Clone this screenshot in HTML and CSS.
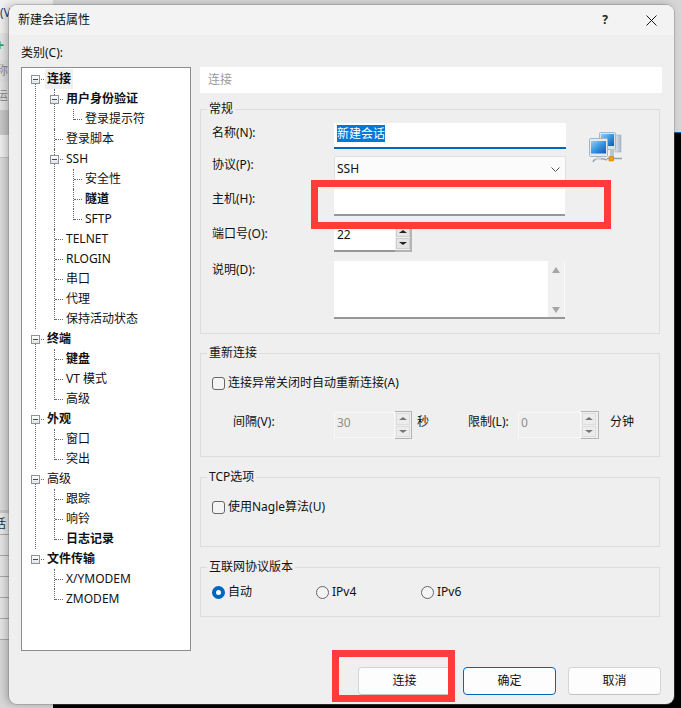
FILE: index.html
```html
<!DOCTYPE html>
<html lang="zh-CN">
<head>
<meta charset="utf-8">
<title>新建会话属性</title>
<link rel="stylesheet" href="styles.css">
</head>
<body>
<div class="desktop">
  <div class="app-side">
    <div class="band band-a"><span class="frag frag-menu">(V</span></div>
    <div class="band band-b"><span class="plus">+</span></div>
    <div class="band band-c"><span class="frag">称</span></div>
    <div class="band band-d"><span class="frag frag-d">运</span></div>
    <div class="band band-e"></div>
    <div class="band band-f"></div>
    <div class="band band-g"></div>
    <div class="band band-h"><span class="frag frag-blue">话</span></div>
    <div class="band band-row"></div>
    <div class="band band-row"></div>
    <div class="band band-row"></div>
    <div class="band band-row"></div>
    <div class="band band-row"></div>
    <div class="band band-rest"></div>
  </div>
  <div class="app-main"><div class="app-top"></div></div>

  <div class="dialog">
    <div class="titlebar">
      <span class="title">新建会话属性</span>
      <span class="help">?</span>
      <svg class="close" width="11" height="11" viewBox="0 0 11 11"><path d="M.5.5l10 10M10.5.5l-10 10" stroke="#1a1a1a" stroke-width="1" fill="none"/></svg>
    </div>
    <div class="body">
      <div class="cat-label">类别(C):</div>
      <div class="main">
        <div class="tree">
          <ul class="lvl0">
            <li><div class="row"><i class="box"></i><span class="txt b sel">连接</span></div>
              <ul class="lvl1">
                <li><div class="row"><i class="box"></i><span class="txt b">用户身份验证</span></div>
                  <ul class="lvl2"><li><div class="row"><span class="txt">登录提示符</span></div></li></ul>
                </li>
                <li><div class="row"><span class="txt">登录脚本</span></div></li>
                <li><div class="row"><i class="box"></i><span class="txt">SSH</span></div>
                  <ul class="lvl2">
                    <li><div class="row"><span class="txt">安全性</span></div></li>
                    <li><div class="row"><span class="txt b">隧道</span></div></li>
                    <li><div class="row"><span class="txt">SFTP</span></div></li>
                  </ul>
                </li>
                <li><div class="row"><span class="txt">TELNET</span></div></li>
                <li><div class="row"><span class="txt">RLOGIN</span></div></li>
                <li><div class="row"><span class="txt">串口</span></div></li>
                <li><div class="row"><span class="txt">代理</span></div></li>
                <li><div class="row"><span class="txt">保持活动状态</span></div></li>
              </ul>
            </li>
            <li><div class="row"><i class="box"></i><span class="txt b">终端</span></div>
              <ul class="lvl1">
                <li><div class="row"><span class="txt b">键盘</span></div></li>
                <li><div class="row"><span class="txt">VT 模式</span></div></li>
                <li><div class="row"><span class="txt">高级</span></div></li>
              </ul>
            </li>
            <li><div class="row"><i class="box"></i><span class="txt b">外观</span></div>
              <ul class="lvl1">
                <li><div class="row"><span class="txt">窗口</span></div></li>
                <li><div class="row"><span class="txt">突出</span></div></li>
              </ul>
            </li>
            <li><div class="row"><i class="box"></i><span class="txt">高级</span></div>
              <ul class="lvl1">
                <li><div class="row"><span class="txt">跟踪</span></div></li>
                <li><div class="row"><span class="txt">响铃</span></div></li>
                <li><div class="row"><span class="txt b">日志记录</span></div></li>
              </ul>
            </li>
            <li><div class="row"><i class="box"></i><span class="txt b">文件传输</span></div>
              <ul class="lvl1">
                <li><div class="row"><span class="txt">X/YMODEM</span></div></li>
                <li><div class="row"><span class="txt">ZMODEM</span></div></li>
              </ul>
            </li>
          </ul>
        </div>

        <div class="pane">
          <div class="pane-head">连接</div>

          <section class="group group-general">
            <span class="legend">常规</span>
            <div class="general-layout">
              <div class="form">
                <div class="field f-name"><label class="lbl">名称(N):</label><div class="input input-focus"><span class="selected">新建会话</span></div></div>
                <div class="field f-proto"><label class="lbl lbl-up">协议(P):</label><div class="combo"><span>SSH</span><svg width="9" height="5" viewBox="0 0 9 5"><path d="M.5.500l4 4 4-4" fill="none" stroke="#555" stroke-width="1"/></svg></div></div>
                <div class="field f-host"><label class="lbl">主机(H):</label><div class="input input-plain"></div></div>
                <div class="field f-port"><label class="lbl lbl-port">端口号(O):</label>
                  <div class="spin">
                    <div class="input input-plain spin-input">22</div>
                    <div class="spin-btns"><b class="sbtn"><i class="up"></i></b><b class="sbtn"><i class="down"></i></b></div>
                  </div>
                </div>
                <div class="field f-desc"><label class="lbl lbl-up">说明(D):</label>
                  <div class="memo"><div class="scroll"><i class="sup"></i><i class="sdown"></i></div></div>
                </div>
              </div>
              <svg class="net-icon" width="34" height="33" viewBox="0 0 34 33">
                <defs>
                  <linearGradient id="scr" x1="0" y1="0" x2="1" y2="1"><stop offset="0" stop-color="#8fd0f5"/><stop offset=".55" stop-color="#2f8fdc"/><stop offset="1" stop-color="#1a55b8"/></linearGradient>
                  <linearGradient id="twr" x1="0" y1="0" x2="1" y2="0"><stop offset="0" stop-color="#dfe6ee"/><stop offset="1" stop-color="#a9b6c4"/></linearGradient>
                </defs>
                <rect x="26" y="4" width="6" height="17" fill="url(#twr)" stroke="#a7b3c0" stroke-width=".6"/>
                <rect x="10.5" y="1.5" width="16" height="17" rx="1" fill="#dbe3ec" stroke="#a9b7c6"/>
                <rect x="12" y="3" width="13" height="12" fill="url(#scr)"/>
                <path d="M21 18h4v9h-4z" fill="#b9c4cf"/>
                <path d="M18 27.5h15" stroke="#93a2b0" stroke-width="1.6"/>
                <rect x="20" y="25.500" width="4.500" height="4.500" fill="#f59a12" stroke="#d07a08" stroke-width=".5"/>
                <rect x=".5" y="7.500" width="18" height="18" rx="1" fill="#e4eaf0" stroke="#a6b4c2"/>
                <rect x="2" y="10" width="15" height="12.500" fill="url(#scr)"/>
                <path d="M4 31c1-4 10-4 14-2" fill="none" stroke="#98a6b4" stroke-width="1.500"/>
                <path d="M7 26h5v3H7z" fill="#cfd8e1"/>
              </svg>
            </div>
          </section>

          <section class="group group-reconnect">
            <span class="legend">重新连接</span>
            <div class="check-row"><i class="check"></i><span>连接异常关闭时自动重新连接(A)</span></div>
            <div class="interval-row">
              <span class="lbl-interval">间隔(V):</span>
              <div class="spin spin-off">
                <div class="spin-input off-input">30</div>
                <div class="spin-btns"><b class="sbtn"><i class="up"></i></b><b class="sbtn"><i class="down"></i></b></div>
              </div>
              <span class="unit-sec">秒</span>
              <span class="lbl-limit">限制(L):</span>
              <div class="spin spin-off spin-wide">
                <div class="spin-input off-input">0</div>
                <div class="spin-btns"><b class="sbtn"><i class="up"></i></b><b class="sbtn"><i class="down"></i></b></div>
              </div>
              <span class="unit-min">分钟</span>
            </div>
          </section>

          <section class="group group-tcp">
            <span class="legend">TCP选项</span>
            <div class="check-row"><i class="check"></i><span>使用Nagle算法(U)</span></div>
          </section>

          <section class="group group-ip">
            <span class="legend">互联网协议版本</span>
            <div class="radio-row">
              <div class="radio-item ri-auto"><i class="radio on"></i><span>自动</span></div>
              <div class="radio-item ri-v4"><i class="radio"></i><span>IPv4</span></div>
              <div class="radio-item"><i class="radio"></i><span>IPv6</span></div>
            </div>
          </section>
        </div>
      </div>
      <div class="footer">
        <button class="btn">连接</button>
        <button class="btn btn-default">确定</button>
        <button class="btn">取消</button>
      </div>
    </div>
  </div>

  <div class="mark mark-host"></div>
  <div class="mark mark-connect"></div>
</div>
</body>
</html>
```
FILE: styles.css
```css
* { box-sizing: border-box; }
html, body { margin: 0; padding: 0; background: #000; }
body {
  font-family: "Noto Sans", "Noto Sans CJK SC", sans-serif;
  font-size: 12px;
  line-height: 20px;
  color: #111;
}
ul { list-style: none; margin: 0; padding: 0; }
i, b { display: block; font-style: normal; font-weight: normal; }

.desktop { position: relative; width: 681px; height: 708px; overflow: hidden; display: flex; background: #000; }

/* application visible behind the dialog */
.app-side { width: 53px; height: 708px; background: #e2e2e2; display: flex; flex-direction: column; }
.band { position: relative; overflow: hidden; padding-left: 0; }
.band-a { height: 33px; background: #f1f1f1; }
.band-b { height: 27px; background: #e6e6e6; }
.band-c { height: 22px; background: #e0e0e0; }
.band-d { height: 28px; background: #e4e4e4; }
.band-e { height: 25px; background: #c9c9c9; }
.band-f { height: 23px; background: #efefef; border-bottom: 1px solid #c4c4c4; }
.band-g { height: 352px; background: #dcdcdc; }
.band-h { height: 25px; background: #e8e8e8; border-top: 3px solid #c8c8c8; border-bottom: 1px solid #aaa; }
.band-row { height: 21px; background: #e6e6e6; border-bottom: 1px solid #aaa; }
.band-rest { flex: 1; background: #d8d8d8; }
.frag { display: block; color: #8a8a8a; line-height: 22px; margin-left: -4px; }
.frag-d { line-height: 28px; }
.frag-menu { color: #1b3a70; margin-left: 0; line-height: 26px; }
.frag-blue { color: #234; margin-left: -6px; line-height: 21px; }
.plus { display: block; color: #3fa34d; font-weight: 700; font-size: 16px; margin-left: -5px; line-height: 24px; }
.app-main { flex: 1; }
.app-top { height: 133px; background: #d6d6d6; border-bottom: 1px solid #0a64b4; }

/* dialog window */
.dialog {
  position: absolute; left: 9px; top: 5px; width: 665px; height: 699px;
  background: #efefef; border-radius: 8px; overflow: hidden;
  box-shadow: 0 0 0 1px rgba(120,120,120,.35), -3px 0 9px rgba(0,0,0,.25);
}
.titlebar { height: 30px; background: #f3f3f3; display: flex; align-items: center; padding-left: 9px; position: relative; }
.title { flex: 1; font-size: 12px; color: #111; }
.help { font-weight: 700; font-size: 12px; margin-right: 38px; color: #222; }
.close { margin-right: 17px; }
.body { padding: 0 12px; }
.cat-label { height: 32px; padding-top: 8px; }
.main { display: flex; gap: 9px; height: 584px; }

/* tree */
.tree { width: 170px; height: 584px; background: #fff; border: 1px solid #8b8d91; padding-top: 1px; }
.row { position: relative; height: 20px; display: flex; align-items: center; }
.txt { position: relative; padding: 0 2px; line-height: 20px; white-space: nowrap; }
.txt.b { font-weight: 700; }
.txt.sel { background: #f0f0f0; }
.lvl0 > li { position: relative; }
.lvl1 > li, .lvl2 > li { position: relative; }

.lvl0 > li > .row { padding-left: 23px; }
.lvl1 > li > .row { padding-left: 42px; }
.lvl2 > li > .row { padding-left: 61px; }

.lvl0 > li::before, .lvl1 > li::before, .lvl2 > li::before {
  content: ""; position: absolute; top: 0; bottom: 0; border-left: 1px dotted #666;
}
.lvl0 > li::before { left: 13px; top: 10px; }
.lvl0 > li:last-child::before { display: none; }
.lvl1 > li::before { left: 32px; }
.lvl2 > li::before { left: 51px; }
.lvl1 > li:last-child::before, .lvl2 > li:last-child::before { bottom: auto; height: 11px; }

.row::before { content: ""; position: absolute; top: 10px; height: 0; border-top: 1px dotted #666; }
.lvl0 > li > .row::before { left: 14px; width: 8px; }
.lvl1 > li > .row::before { left: 33px; width: 8px; }
.lvl2 > li > .row::before { left: 52px; width: 8px; }

.box {
  position: absolute; top: 6px; width: 9px; height: 9px; z-index: 1;
  background: linear-gradient(#fff, #e3e5ea); border: 1px solid #8c929b;
}
.box::after { content: ""; position: absolute; left: 1px; right: 1px; top: 3px; height: 1px; background: #34477a; }
.lvl0 > li > .row > .box { left: 9px; }
.lvl1 > li > .row > .box { left: 28px; }

/* right pane */
.pane { width: 462px; }
.pane-head { height: 26px; background: #fff; padding-left: 8px; line-height: 25px; color: #9b9b9b; }
.group { position: relative; width: 460px; border: 1px solid #dcdcdc; padding-left: 11px; }
.legend { position: absolute; left: 6px; top: -11px; padding: 0 2px; background: #efefef; line-height: 20px; }

.group-general { margin-top: 16px; height: 225px; }
.general-layout { display: flex; }
.form { width: 354px; display: flex; flex-direction: column; }
.field { display: flex; align-items: flex-start; }
.lbl { width: 122px; flex: none; height: 20px; }
.lbl-up { margin-top: -1px; }
.lbl-port { margin-top: 1px; }
.f-name { margin-top: 13px; }
.f-proto { margin-top: 7px; }
.f-host { margin-top: 7px; }
.f-port { margin-top: 7px; }
.f-desc { margin-top: 9px; }

.input { background: #fff; height: 26px; width: 232px; padding-left: 3px; line-height: 26px; }
.input-focus { border-bottom: 2px solid #0067c0; padding-top: 2px; line-height: 17px; }
.selected { display: inline-block; background: #0078d7; color: #fff; height: 17px; line-height: 17px; }
.input-plain { border-bottom: 2px solid #979797; width: 231px; height: 27px; }
.combo {
  width: 232px; height: 26px; background: #fbfbfb; border: 1px solid #e0e0e0; border-bottom-color: #cfcfcf; border-radius: 2px;
  display: flex; align-items: center; justify-content: space-between; padding: 0 5px 0 2px;
}
.spin { display: flex; }
.spin-input { width: 61px; height: 29px; padding-left: 3px; line-height: 24px; }
.spin-btns {
  width: 17px; height: 29px; padding: 3px 1px 1px 1px; background: #efefef; display: flex; flex-direction: column; gap: 1px;
  border-right: 2px solid #b4b4b4; border-bottom: 2px solid #b4b4b4;
}
.sbtn { width: 14px; height: 12px; background: #e4e4e4; border: 1px solid #cfcfcf; display: flex; align-items: center; justify-content: center; }
.up { width: 0; height: 0; border-left: 4px solid transparent; border-right: 4px solid transparent; border-bottom: 3px solid #222; }
.down { width: 0; height: 0; border-left: 4px solid transparent; border-right: 4px solid transparent; border-top: 3px solid #222; }
.memo { width: 231px; height: 58px; background: #fff; border-bottom: 2px solid #979797; display: flex; justify-content: flex-end; }
.scroll { width: 17px; height: 56px; background: #f0f0f0; border-right: 1px solid #fafafa; display: flex; flex-direction: column; justify-content: space-between; padding: 6px 0 4px 4px; }
.sup { width: 0; height: 0; border-left: 4px solid transparent; border-right: 4px solid transparent; border-bottom: 6px solid #a6a6a6; }
.sdown { width: 0; height: 0; border-left: 4px solid transparent; border-right: 4px solid transparent; border-top: 6px solid #a6a6a6; }
.net-icon { margin: 21px 0 0 23px; flex: none; }

.group-reconnect { margin-top: 19px; height: 104px; }
.check-row { display: flex; align-items: center; gap: 3px; }
.check { width: 13px; height: 13px; border: 1px solid #666; border-radius: 3px; background: #f4f4f4; }
.group-reconnect .check-row { margin-top: 19px; }
.interval-row { display: flex; align-items: flex-start; margin-top: 19px; }
.lbl-interval { width: 122px; padding-left: 21px; flex: none; }
.lbl-limit { width: 50px; flex: none; }
.unit-sec { width: 56px; flex: none; padding-left: 5px; }
.unit-min { padding-left: 11px; }
.spin-off .spin-input { height: 26px; line-height: 19px; padding-left: 2px; color: #8d8d8d; border: 1px solid #f8f8f8; }
.spin-off .spin-btns { height: 28px; margin-top: -1px; border-top: 1px solid #b4b4b4; padding: 1px; border-right: 1px solid #b4b4b4; border-bottom: 1px solid #b4b4b4; }
.spin-off .sbtn { width: 14px; height: 12px; background: #ececec; border-color: #dcdcdc; }
.spin-off .up { border-bottom: 3px solid #777; }
.spin-off .down { border-top: 3px solid #777; }
.spin-wide .spin-input { width: 63px; }
.spin-wide .spin-btns { width: 18px; }

.group-tcp { margin-top: 20px; height: 70px; }
.group-tcp .check-row { margin-top: 19px; }

.group-ip { margin-top: 20px; height: 50px; }
.radio-row { display: flex; margin-top: 14px; }
.radio-item { display: flex; align-items: center; gap: 3px; }
.ri-auto { width: 104px; }
.ri-v4 { width: 105px; }
.radio { width: 13px; height: 13px; border: 1px solid #666; border-radius: 50%; background: #f4f4f4; }
.radio.on { border: 4px solid #0067c0; background: #fff; }

.footer { display: flex; justify-content: flex-end; gap: 12px; margin-top: 16px; margin-right: 1px; }
.btn {
  width: 93px; height: 28px; padding: 0; font: inherit; color: #111;
  background: #fdfdfd; border: 1px solid #d4d4d4; border-bottom-color: #c2c2c2; border-radius: 4px;
}
.btn-default { border: 1px solid #0067c0; }

/* red annotation frames painted over the screenshot */
.mark { position: absolute; border: 7px solid #ff3b3b; }
.mark-host { left: 311px; top: 180px; width: 300px; height: 49px; }
.mark-connect { left: 332px; top: 650px; width: 123px; height: 52px; }
```
